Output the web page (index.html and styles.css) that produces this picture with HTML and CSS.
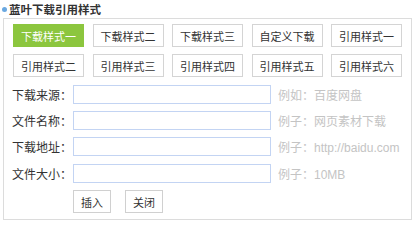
FILE: index.html
```html
<!DOCTYPE html>
<html lang="zh">
<head>
<meta charset="utf-8">
<link rel="stylesheet" href="styles.css">
</head>
<body>
<div class="title"><span class="dot"></span>蓝叶下载引用样式</div>
<div class="panel">
  <div class="styles">
    <button class="sbtn active">下载样式一</button>
    <button class="sbtn">下载样式二</button>
    <button class="sbtn">下载样式三</button>
    <button class="sbtn">自定义下载</button>
    <button class="sbtn">引用样式一</button>
    <button class="sbtn">引用样式二</button>
    <button class="sbtn">引用样式三</button>
    <button class="sbtn">引用样式四</button>
    <button class="sbtn">引用样式五</button>
    <button class="sbtn">引用样式六</button>
  </div>
  <div class="form">
    <div class="row"><label class="lbl">下载来源：</label><input class="inp" type="text"><span class="hint">例如：百度网盘</span></div>
    <div class="row"><label class="lbl">文件名称：</label><input class="inp" type="text"><span class="hint">例子：网页素材下载</span></div>
    <div class="row"><label class="lbl">下载地址：</label><input class="inp" type="text"><span class="hint">例子：http://baidu.com</span></div>
    <div class="row"><label class="lbl">文件大小：</label><input class="inp" type="text"><span class="hint">例子：10MB</span></div>
  </div>
  <div class="actions">
    <button class="abtn">插入</button>
    <button class="abtn">关闭</button>
  </div>
</div>
</body>
</html>
```
FILE: styles.css
```css
* { box-sizing: border-box; }
body {
  margin: 0;
  background: #fff;
  font-family: "Liberation Sans", "Noto Sans CJK SC", sans-serif;
  color: #333;
}
.title {
  height: 18px;
  display: flex;
  align-items: center;
  font-size: 11.5px;
  font-weight: bold;
  color: #333;
  padding-left: 2px;
}
.dot {
  width: 5px;
  height: 5px;
  border-radius: 50%;
  background: #6aa8e0;
  margin-right: 2px;
}
.panel {
  margin-left: 3px;
  width: 409px;
  height: 202px;
  border: 1px solid #dcdcdc;
  padding: 5px 8px 0 9px;
}
.styles {
  display: grid;
  grid-template-columns: repeat(5, 71px);
  column-gap: 8.5px;
  row-gap: 7px;
}
.sbtn {
  height: 23px;
  border: 1px solid #d4d4d4;
  background: #fff;
  font-family: inherit;
  font-size: 11px;
  color: #333;
  padding: 0;
  white-space: nowrap;
}
.sbtn.active {
  background: #8cc63e;
  border-color: #8cc63e;
  color: #fff;
}
.form {
  margin-top: 4px;
}
.row {
  display: flex;
  align-items: center;
  height: 26.3px;
}
.lbl {
  flex: 0 0 60px;
  margin-left: -1px;
  margin-right: 1px;
  font-size: 12px;
  color: #333;
  white-space: nowrap;
}
.inp {
  flex: 0 0 198px;
  width: 198px;
  height: 19px;
  border: 1px solid #c3d4f3;
  margin: 0;
  padding: 0 3px;
}
.hint {
  margin-left: 7px;
  font-size: 12px;
  color: #c4c4c4;
  white-space: nowrap;
}
.actions {
  display: flex;
  gap: 14px;
  margin-top: 4px;
  padding-left: 60px;
}
.abtn {
  width: 38px;
  height: 23px;
  border: 1px solid #d0d0d0;
  background: #fff;
  font-family: inherit;
  font-size: 11px;
  color: #333;
  padding: 0;
}
```
